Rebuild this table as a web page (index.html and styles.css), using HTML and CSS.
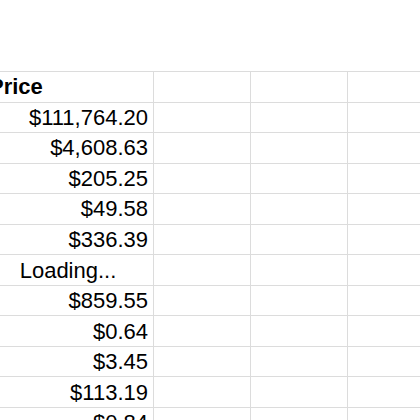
FILE: index.html
```html
<!DOCTYPE html>
<html>
<head>
<meta charset="utf-8">
<link rel="stylesheet" href="styles.css">
</head>
<body>
<div class="page">
  <div class="sheet">
    <div class="cell head">Price</div><div class="cell"></div><div class="cell"></div><div class="cell"></div>
    <div class="cell num">$111,764.20</div><div class="cell"></div><div class="cell"></div><div class="cell"></div>
    <div class="cell num">$4,608.63</div><div class="cell"></div><div class="cell"></div><div class="cell"></div>
    <div class="cell num">$205.25</div><div class="cell"></div><div class="cell"></div><div class="cell"></div>
    <div class="cell num">$49.58</div><div class="cell"></div><div class="cell"></div><div class="cell"></div>
    <div class="cell num">$336.39</div><div class="cell"></div><div class="cell"></div><div class="cell"></div>
    <div class="cell center">Loading...</div><div class="cell"></div><div class="cell"></div><div class="cell"></div>
    <div class="cell num">$859.55</div><div class="cell"></div><div class="cell"></div><div class="cell"></div>
    <div class="cell num">$0.64</div><div class="cell"></div><div class="cell"></div><div class="cell"></div>
    <div class="cell num">$3.45</div><div class="cell"></div><div class="cell"></div><div class="cell"></div>
    <div class="cell num">$113.19</div><div class="cell"></div><div class="cell"></div><div class="cell"></div>
    <div class="cell num">$0.84</div><div class="cell"></div><div class="cell"></div><div class="cell"></div>
  </div>
</div>
</body>
</html>
```
FILE: styles.css
```css
html, body {
  margin: 0;
  padding: 0;
  background: #ffffff;
}
.page {
  width: 420px;
  height: 420px;
  overflow: hidden;
  padding-top: 71px;
  box-sizing: border-box;
}
.sheet {
  margin-left: -18px;
  display: grid;
  grid-template-columns: 172px 97px 97px 97px;
  grid-auto-rows: 30.55px;
  border-top: 1px solid #dcdcdc;
  font-family: "Liberation Sans", Arial, sans-serif;
  font-size: 22px;
  color: #000;
}
.cell {
  box-sizing: border-box;
  border-right: 1px solid #dcdcdc;
  border-bottom: 1px solid #dcdcdc;
  display: flex;
  align-items: center;
  padding: 1px 5px 0;
  white-space: nowrap;
  overflow: hidden;
}
.head {
  font-weight: bold;
  padding-left: 7px;
}
.num {
  justify-content: flex-end;
}
.center {
  justify-content: center;
  padding-right: 4px;
}
```
